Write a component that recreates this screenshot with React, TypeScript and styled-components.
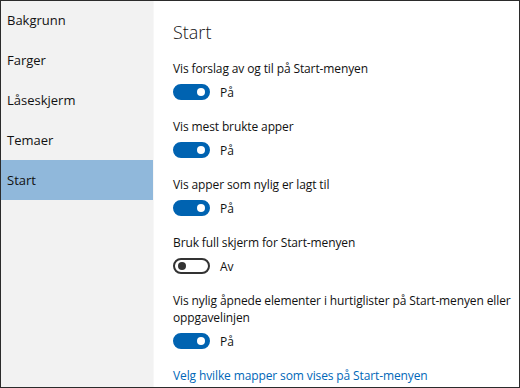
import React from 'react';
import styled, { createGlobalStyle } from 'styled-components';

const GlobalStyle = createGlobalStyle`
  html, body {
    margin: 0;
    padding: 0;
    background: #ffffff;
  }
  body {
    font-family: "Open Sans", "Noto Sans", "Liberation Sans", sans-serif;
    color: #000000;
  }
`;

const Window = styled.div`
  width: 520px;
  height: 388px;
  box-sizing: border-box;
  border: 1px solid #2b2b2b;
  display: flex;
  overflow: hidden;
  background: #ffffff;
`;

const Sidebar = styled.nav`
  width: 152px;
  flex-shrink: 0;
  background: #f2f2f2;
  border-right: 1px solid #f7f7f7;
  display: flex;
  flex-direction: column;
  margin-top: -1px;
`;

const NavItem = styled.div<{ active?: boolean }>`
  height: 40px;
  display: flex;
  align-items: center;
  padding-left: 6px;
  font-size: 13px;
  color: #111111;
  background: ${props => (props.active ? '#90b8db' : 'transparent')};
`;

const Content = styled.main`
  flex: 1;
  padding: 18px 0 0 19px;
  display: flex;
  flex-direction: column;
`;

const Heading = styled.h1`
  margin: 0 0 15px 0;
  height: 26px;
  line-height: 26px;
  font-size: 18px;
  font-weight: 300;
  color: #111111;
`;

const Setting = styled.div`
  display: flex;
  flex-direction: column;
  margin-bottom: 17px;
`;

const Label = styled.div`
  font-size: 12px;
  line-height: 17px;
  letter-spacing: -0.12px;
  color: #111111;
`;

const ToggleRow = styled.div`
  margin-top: 6px;
  height: 18px;
  display: flex;
  align-items: center;
  gap: 10px;
`;

const Track = styled.span<{ on: boolean }>`
  width: 37px;
  height: 16px;
  box-sizing: border-box;
  border-radius: 8px;
  border: 2px solid ${props => (props.on ? '#0063b1' : '#333333')};
  background: ${props => (props.on ? '#0063b1' : '#ffffff')};
  display: flex;
  align-items: center;
  justify-content: ${props => (props.on ? 'flex-end' : 'flex-start')};
  padding: 0 3px;
`;

const Knob = styled.span<{ on: boolean }>`
  width: 8px;
  height: 8px;
  border-radius: 50%;
  background: ${props => (props.on ? '#ffffff' : '#333333')};
`;

const State = styled.span`
  font-size: 12px;
  color: #111111;
`;

const Link = styled.a`
  font-size: 12px;
  line-height: 17px;
  letter-spacing: -0.12px;
  color: #0067b8;
  text-decoration: none;
  cursor: pointer;
`;

interface Option {
    label: string;
    on: boolean;
}

const navItems = ['Bakgrunn', 'Farger', 'Låseskjerm', 'Temaer', 'Start'];

const options: Option[] = [
    { label: 'Vis forslag av og til på Start-menyen', on: true },
    { label: 'Vis mest brukte apper', on: true },
    { label: 'Vis apper som nylig er lagt til', on: true },
    { label: 'Bruk full skjerm for Start-menyen', on: false },
    { label: 'Vis nylig åpnede elementer i hurtiglister på Start-menyen eller oppgavelinjen', on: true },
];

const Toggle: React.FC<{ on: boolean }> = ({ on }) => (
    <ToggleRow>
        <Track on={on}>
            <Knob on={on} />
        </Track>
        <State>{on ? 'På' : 'Av'}</State>
    </ToggleRow>
);

const App: React.FC = () => {
    return (
        <>
            <GlobalStyle />
            <Window>
                <Sidebar>
                    {navItems.map(item => (
                        <NavItem key={item} active={item === 'Start'}>{item}</NavItem>
                    ))}
                </Sidebar>
                <Content>
                    <Heading>Start</Heading>
                    {options.map((opt, i) => (
                        <Setting key={i}>
                            <Label>{opt.label}</Label>
                            <Toggle on={opt.on} />
                        </Setting>
                    ))}
                    <Link>Velg hvilke mapper som vises på Start-menyen</Link>
                </Content>
            </Window>
        </>
    );
};

export default App;
